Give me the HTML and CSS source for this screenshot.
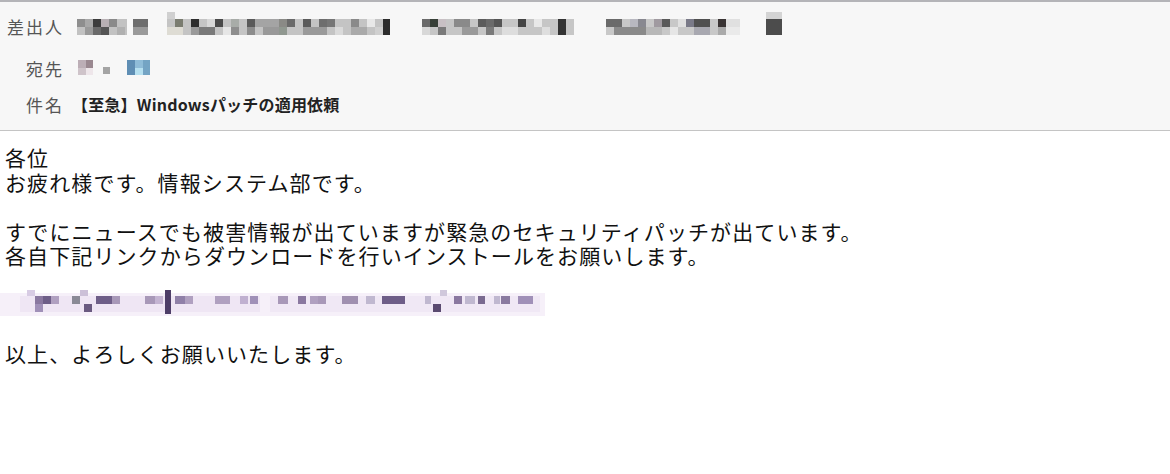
FILE: index.html
```html
<!DOCTYPE html>
<html lang="ja">
<head>
    <meta charset="UTF-8">
    <meta name="viewport" content="width=device-width, initial-scale=1.0">
    <title>【至急】Windowsパッチの適用依頼</title>
    <link rel="stylesheet" href="styles.css">
</head>
<body>
    <!-- Mail header -->
    <div class="mail-head">
        <div class="head-row row-from">
            <span class="label">差出人</span>
            <svg class="mosaic" width="720" height="30" viewBox="0 0 720 30">
                <!-- sender name -->
                <rect x="5" y="8" width="50" height="16" fill="#c2c2c2"/>
                <rect x="5" y="8" width="8" height="8" fill="#8e8e8e"/>
                <rect x="13" y="8" width="8" height="8" fill="#a8a8a8"/>
                <rect x="21" y="8" width="8" height="8" fill="#3c3c3c"/>
                <rect x="29" y="8" width="8" height="8" fill="#b8b0b4"/>
                <rect x="37" y="8" width="8" height="8" fill="#8a8a8a"/>
                <rect x="13" y="16" width="8" height="8" fill="#9a9a9a"/>
                <rect x="21" y="16" width="8" height="8" fill="#6a6a6a"/>
                <rect x="29" y="16" width="8" height="8" fill="#555"/>
                <rect x="45" y="16" width="8" height="8" fill="#b0b0b0"/>
                <rect x="61" y="8" width="15" height="8" fill="#6e6e6e"/>
                <rect x="61" y="16" width="15" height="8" fill="#9a9a9a"/>
                <!-- address part 1 -->
                <rect x="95" y="1" width="8" height="7" fill="#d0d0d0"/>
                <rect x="95" y="8" width="223" height="16" fill="#c4c4c4"/>
                <rect x="95" y="16" width="16" height="8" fill="#dedcd4"/>
                <rect x="103" y="8" width="8" height="8" fill="#7a7c70"/>
                <rect x="119" y="8" width="8" height="8" fill="#2e2e2e"/>
                <rect x="135" y="8" width="8" height="8" fill="#d8d8d8"/>
                <rect x="143" y="8" width="8" height="8" fill="#4a4a4a"/>
                <rect x="159" y="8" width="8" height="8" fill="#a8aca8"/>
                <rect x="119" y="16" width="8" height="8" fill="#9a9a9a"/>
                <rect x="127" y="16" width="16" height="8" fill="#7a7a7a"/>
                <rect x="151" y="16" width="8" height="8" fill="#e6e6e6"/>
                <rect x="159" y="16" width="8" height="8" fill="#8e8e8e"/>
                <rect x="175" y="8" width="8" height="8" fill="#5a5a5a"/>
                <rect x="183" y="8" width="24" height="8" fill="#a4a4a4"/>
                <rect x="207" y="8" width="8" height="8" fill="#8a8a86"/>
                <rect x="215" y="8" width="8" height="8" fill="#6a6a6a"/>
                <rect x="231" y="8" width="8" height="8" fill="#5a5a5a"/>
                <rect x="247" y="8" width="8" height="8" fill="#6e6e6e"/>
                <rect x="255" y="8" width="8" height="8" fill="#767676"/>
                <rect x="279" y="8" width="8" height="8" fill="#8a8a8a"/>
                <rect x="295" y="8" width="8" height="8" fill="#e8e8e8"/>
                <rect x="311" y="8" width="7" height="16" fill="#2c2c2c"/>
                <rect x="175" y="16" width="8" height="8" fill="#8c8c8c"/>
                <rect x="191" y="16" width="16" height="8" fill="#999"/>
                <rect x="207" y="16" width="8" height="8" fill="#909890"/>
                <rect x="231" y="16" width="24" height="8" fill="#9a9a9a"/>
                <rect x="263" y="16" width="8" height="8" fill="#dadada"/>
                <rect x="279" y="16" width="16" height="8" fill="#aaa"/>
                <rect x="303" y="16" width="8" height="8" fill="#d0d0d0"/>
                <!-- address part 2 -->
                <rect x="350" y="8" width="152" height="16" fill="#c6c6c6"/>
                <rect x="350" y="8" width="8" height="8" fill="#6a6a6a"/>
                <rect x="358" y="8" width="8" height="8" fill="#384038"/>
                <rect x="366" y="8" width="8" height="8" fill="#c8c0c4"/>
                <rect x="382" y="8" width="16" height="8" fill="#8a8a8a"/>
                <rect x="406" y="8" width="8" height="8" fill="#5c5c5c"/>
                <rect x="414" y="8" width="8" height="8" fill="#6a6a6a"/>
                <rect x="422" y="8" width="8" height="8" fill="#555"/>
                <rect x="446" y="8" width="8" height="8" fill="#444"/>
                <rect x="462" y="8" width="8" height="8" fill="#e8e8e8"/>
                <rect x="486" y="8" width="8" height="16" fill="#333"/>
                <rect x="350" y="16" width="8" height="8" fill="#d8d8d8"/>
                <rect x="366" y="16" width="8" height="8" fill="#7a7a7a"/>
                <rect x="390" y="16" width="16" height="8" fill="#9a9a9a"/>
                <rect x="414" y="16" width="8" height="8" fill="#7a7a7a"/>
                <rect x="430" y="16" width="16" height="8" fill="#ddd"/>
                <rect x="470" y="16" width="8" height="8" fill="#dedede"/>
                <!-- address part 3 -->
                <rect x="534" y="8" width="134" height="16" fill="#c8c8c8"/>
                <rect x="534" y="8" width="16" height="8" fill="#6a6a6a"/>
                <rect x="558" y="8" width="8" height="8" fill="#b8b8c0"/>
                <rect x="566" y="8" width="8" height="8" fill="#888890"/>
                <rect x="582" y="8" width="8" height="8" fill="#a09aa0"/>
                <rect x="590" y="8" width="8" height="8" fill="#5a5a5a"/>
                <rect x="606" y="8" width="8" height="8" fill="#e0e0e0"/>
                <rect x="614" y="8" width="8" height="8" fill="#7a7a88"/>
                <rect x="622" y="8" width="16" height="8" fill="#505050"/>
                <rect x="646" y="8" width="8" height="8" fill="#3a3434"/>
                <rect x="654" y="8" width="14" height="8" fill="#e0e0e0"/>
                <rect x="542" y="16" width="32" height="8" fill="#8a8a8a"/>
                <rect x="574" y="16" width="16" height="8" fill="#b8b8b8"/>
                <rect x="598" y="16" width="8" height="8" fill="#e6e6e6"/>
                <rect x="622" y="16" width="16" height="8" fill="#a8a8b0"/>
                <rect x="646" y="16" width="8" height="8" fill="#aaa"/>
                <rect x="654" y="16" width="14" height="8" fill="#eaeaea"/>
                <rect x="694" y="1" width="16" height="7" fill="#d4d4d4"/>
                <rect x="694" y="8" width="16" height="16" fill="#4c4c4c"/>
            </svg>
        </div>
        <div class="head-row row-to">
            <span class="label">宛先</span>
            <svg class="mosaic" width="90" height="20" viewBox="0 0 90 20">
                <rect x="6" y="2" width="8" height="8" fill="#bcaeb6"/>
                <rect x="14" y="2" width="7" height="8" fill="#9a8890"/>
                <rect x="6" y="10" width="8" height="7" fill="#cfc4ca"/>
                <rect x="14" y="10" width="7" height="7" fill="#eee6ea"/>
                <rect x="31" y="9" width="7" height="7" fill="#a4a4a4"/>
                <rect x="55" y="2" width="8" height="15" fill="#5f8eb4"/>
                <rect x="63" y="2" width="8" height="8" fill="#8fbcd8"/>
                <rect x="63" y="10" width="8" height="7" fill="#b6e0f0"/>
                <rect x="71" y="2" width="7" height="15" fill="#74a4c4"/>
            </svg>
        </div>
        <div class="head-row row-subject">
            <span class="label">件名</span>
            <span class="subject">【至急】Windowsパッチの適用依頼</span>
        </div>
    </div>

    <!-- Mail body -->
    <div class="mail-body">
        <p>各位<br>お疲れ様です。情報システム部です。</p>
        <p>すでにニュースでも被害情報が出ていますが緊急のセキュリティパッチが出ています。<br>各自下記リンクからダウンロードを行いインストールをお願いします。</p>
        <div class="link-line">
            <svg width="550" height="25" viewBox="0 0 550 25">
                <rect x="0" y="1" width="545" height="23" fill="#f6f0f9"/>
                <rect x="20" y="4" width="240" height="16" fill="#efe6f4"/>
                <rect x="270" y="4" width="270" height="16" fill="#f0e8f5"/>
                <rect x="27" y="-2" width="8" height="6" fill="#d8cce4"/>
                <rect x="35" y="4" width="8" height="8" fill="#8a78a0"/>
                <rect x="43" y="4" width="8" height="8" fill="#6e5e88"/>
                <rect x="51" y="4" width="8" height="8" fill="#b0a0c0"/>
                <rect x="35" y="12" width="8" height="8" fill="#a090b8"/>
                <rect x="72" y="4" width="8" height="8" fill="#8a8a96"/>
                <rect x="80" y="-2" width="8" height="6" fill="#ccc0d8"/>
                <rect x="84" y="12" width="8" height="8" fill="#6a5a80"/>
                <rect x="96" y="4" width="16" height="8" fill="#6e5e88"/>
                <rect x="112" y="4" width="8" height="8" fill="#a898b8"/>
                <rect x="145" y="4" width="10" height="8" fill="#a898b8"/>
                <rect x="155" y="4" width="8" height="8" fill="#c4b4d2"/>
                <rect x="165" y="-2" width="6" height="24" fill="#4e3e68"/>
                <rect x="175" y="4" width="10" height="8" fill="#9080a8"/>
                <rect x="185" y="4" width="8" height="8" fill="#b0a0c0"/>
                <rect x="215" y="4" width="15" height="8" fill="#b0a0c0"/>
                <rect x="240" y="4" width="8" height="8" fill="#c0b0d0"/>
                <rect x="250" y="4" width="8" height="8" fill="#a090b8"/>
                <rect x="278" y="4" width="10" height="8" fill="#a898b8"/>
                <rect x="298" y="4" width="8" height="8" fill="#8a78a0"/>
                <rect x="310" y="4" width="8" height="8" fill="#b0a0c0"/>
                <rect x="318" y="4" width="8" height="8" fill="#a898b8"/>
                <rect x="342" y="4" width="16" height="8" fill="#a090b0"/>
                <rect x="366" y="4" width="9" height="8" fill="#c0b8d0"/>
                <rect x="382" y="4" width="23" height="8" fill="#6e5e88"/>
                <rect x="425" y="4" width="6" height="8" fill="#c0b8d0"/>
                <rect x="433" y="12" width="8" height="8" fill="#5a4a70"/>
                <rect x="440" y="-2" width="7" height="6" fill="#d0c8dc"/>
                <rect x="454" y="4" width="8" height="8" fill="#8a78a0"/>
                <rect x="465" y="4" width="10" height="8" fill="#c0b8d0"/>
                <rect x="478" y="4" width="7" height="8" fill="#7a6a90"/>
                <rect x="494" y="4" width="6" height="8" fill="#c0b8d0"/>
                <rect x="501" y="4" width="9" height="8" fill="#8a7aa0"/>
                <rect x="518" y="4" width="15" height="8" fill="#a090b8"/>
            </svg>
        </div>
        <p>以上、よろしくお願いいたします。</p>
    </div>
</body>
</html>
```

FILE: styles.css
```css
body {
    margin: 0;
    padding: 0;
    background-color: #fff;
    font-family: "Noto Sans CJK JP", "Noto Sans", sans-serif;
}
.mail-head {
    background-color: #f7f7f7;
    border-top: 2px solid #b4b4b8;
    border-bottom: 1px solid #c4c4c4;
    padding-bottom: 8px;
    height: 120px;
}
.head-row {
    display: grid;
    grid-template-columns: 62px 1fr;
    column-gap: 10px;
    align-items: center;
}
.row-from {
    height: 48px;
}
.row-to,
.row-subject {
    height: 36px;
}
.label {
    text-align: right;
    color: #555;
    font-size: 17px;
    letter-spacing: 2px;
    margin-right: -2px;
    white-space: nowrap;
}
.mosaic {
    display: block;
}
.subject {
    font-size: 16px;
    font-weight: bold;
    color: #222;
    letter-spacing: 0.2px;
}
.mail-body {
    padding: 14px 5px 0;
    font-size: 21px;
    letter-spacing: 1.1px;
    line-height: 24.5px;
    color: #111;
}
.mail-body p {
    margin: 0 0 24.5px;
}
.link-line {
    height: 24.5px;
    margin: 0 0 24.5px -5px;
}
.link-line svg {
    display: block;
    overflow: visible;
}
```
